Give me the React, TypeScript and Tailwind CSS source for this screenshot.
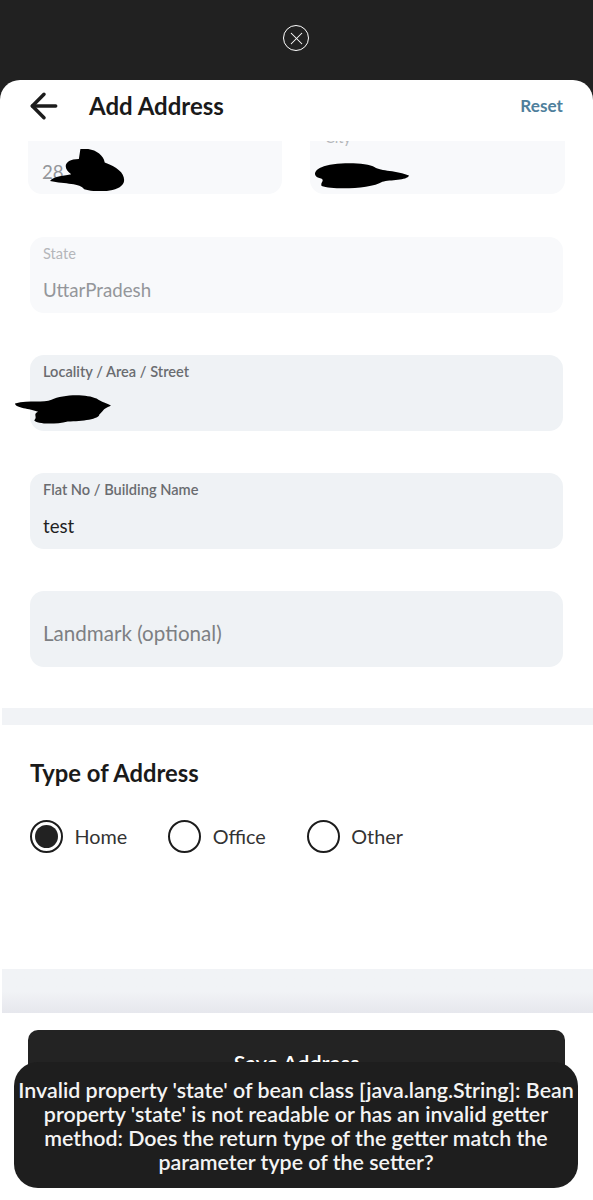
import React from 'react';
import { ArrowLeft, X } from 'lucide-react';

const font = "[font-family:Lato,'Noto_Sans',sans-serif]";

const Blot = ({ className, d }: { className: string; d: string }) => (
  <svg className={`absolute ${className}`} viewBox="0 0 100 50" preserveAspectRatio="none">
    <path d={d} fill="#000" />
  </svg>
);

const Field = ({ label, value, dim, dark }: { label?: string; value?: string; dim?: boolean; dark?: boolean }) => (
  <div className={`relative h-[76px] mx-[30px] rounded-[14px] px-[13px] ${dim ? 'bg-[#f8f9fb]' : 'bg-[#eff2f5]'}`}>
    {label && (
      <div className={`pt-[9px] text-[14.6px] leading-[16px] ${dim ? 'text-[#b4b6ba]' : 'text-[#6a6c70] font-semibold'}`}>{label}</div>
    )}
    {value && (
      <div className={`mt-[15px] text-[18.7px] leading-[26px] ${dark ? 'text-[#1f1f1f]' : 'text-[#94969a]'}`}>
        {value}
      </div>
    )}
  </div>
);

const Radio = ({ label, checked }: { label: string; checked?: boolean }) => (
  <div className="flex items-center gap-[11.5px]">
    <div className="w-[33px] h-[33px] rounded-full border-[2px] border-[#1c1c1c] flex items-center justify-center">
      {checked && <div className="w-[23px] h-[23px] rounded-full bg-[#222]" />}
    </div>
    <span className="text-[19.8px] text-[#333]">{label}</span>
  </div>
);

export default function App() {
  return (
    <div className={`relative w-[593px] h-[1200px] overflow-hidden bg-white ${font}`}>
      {/* top overlay */}
      <div className="h-[100px] bg-[#212121] flex justify-center pt-[25px] pr-[1px]">
        <div className="w-[26px] h-[26px] rounded-full border-[1.5px] border-white flex items-center justify-center">
          <X size={21} strokeWidth={1.2} color="#fff" />
        </div>
      </div>

      <div className="-mt-[20px] relative bg-white rounded-t-[20px]">
        {/* header */}
        <div className="h-[61px] flex items-center pl-[24px] pr-[30px] pb-[10px]">
          <ArrowLeft size={40} strokeWidth={2.1} color="#1c1c1c" />
          <span className="ml-[25px] text-[24px] font-bold text-[#1a1a1a]">Add Address</span>
          <span className="ml-auto text-[17.2px] font-bold text-[#4f7f9c]">Reset</span>
        </div>

        {/* clipped first row */}
        <div className="flex gap-[28px] pl-[28px] pr-[28px]">
          <div className="relative w-[254px] h-[53px] rounded-b-[14px] bg-[#f8f9fb]">
            <span className="absolute left-[14px] top-[18px] text-[18.7px] leading-[26px] text-[#94969a]">28</span>
            <Blot
              className="left-[22px] top-[8px] w-[76px] h-[42px]"
              d="M40 0 C55 -2 70 5 72 16 C90 22 100 30 97 40 C92 52 60 52 45 48 C40 40 20 42 0 38 C5 32 20 32 28 30 C15 22 20 12 38 12 Z"
            />
          </div>
          <div className="relative flex-1 h-[53px] rounded-b-[14px] bg-[#f8f9fb] overflow-hidden">
            <span className="absolute left-[15px] -top-[11px] text-[14.6px] leading-[16px] text-[#b4b6ba]">City</span>
            <Blot
              className="left-[4px] top-[22px] w-[95px] h-[26px]"
              d="M8 8 C20 -2 55 -2 64 8 C70 16 88 14 100 24 C98 34 80 32 72 36 C60 50 20 52 8 44 C6 36 14 32 4 28 C-2 22 2 12 8 8 Z"
            />
          </div>
        </div>

        <div className="mt-[43px] flex flex-col gap-[42px]">
          <Field label="State" value="UttarPradesh" dim />
          <div className="relative">
            <Field label="Locality / Area / Street" />
            <Blot
              className="left-[15px] top-[40px] w-[96px] h-[30px]"
              d="M0 14 C15 8 30 14 38 8 C50 -2 75 -2 85 6 C90 12 96 14 100 18 C90 24 92 28 88 32 C88 40 70 44 55 44 C40 50 22 48 20 42 C24 36 18 32 24 28 C16 22 0 22 0 14 Z"
            />
          </div>
          <Field label="Flat No / Building Name" value="test" dark />
          <div className="h-[76px] mx-[30px] rounded-[14px] px-[13px] pt-[29px] bg-[#eff2f5] text-[20.6px] leading-[26px] text-[#7d7f83]">
            Landmark (optional)
          </div>
        </div>

        <div className="mt-[41px] ml-[2px] h-[17px] bg-[#f1f3f6]" />

        {/* address type */}
        <div className="px-[30px]">
          <h2 className="mt-[32px] text-[23.8px] leading-[32px] font-bold text-[#1a1a1a]">Type of Address</h2>
          <div className="mt-[31px] flex gap-[41px]">
            <Radio label="Home" checked />
            <Radio label="Office" />
            <Radio label="Other" />
          </div>
        </div>

        <div className="mt-[116px] ml-[2px] h-[44px] bg-gradient-to-b from-[#f1f3f6] from-50% to-[#e6e7ed]" />

        {/* footer button */}
        <div className="mt-[17px] mx-[28px] h-[80px] rounded-[10px] bg-[#232323] pt-[17px] text-center text-[21.5px] font-semibold text-white">
          Save Address
        </div>
      </div>

      {/* error toast */}
      <div className="absolute left-[14px] top-[1062px] w-[564px] h-[126px] rounded-[24px] bg-[#1e1e1e] pt-[16px] text-center text-[21.4px] leading-[24px] font-semibold text-[#f4f4f4]">
        Invalid property 'state' of bean class [java.lang.String]: Bean
        <br />
        property 'state' is not readable or has an invalid getter
        <br />
        method: Does the return type of the getter match the
        <br />
        parameter type of the setter?
      </div>
    </div>
  );
}
